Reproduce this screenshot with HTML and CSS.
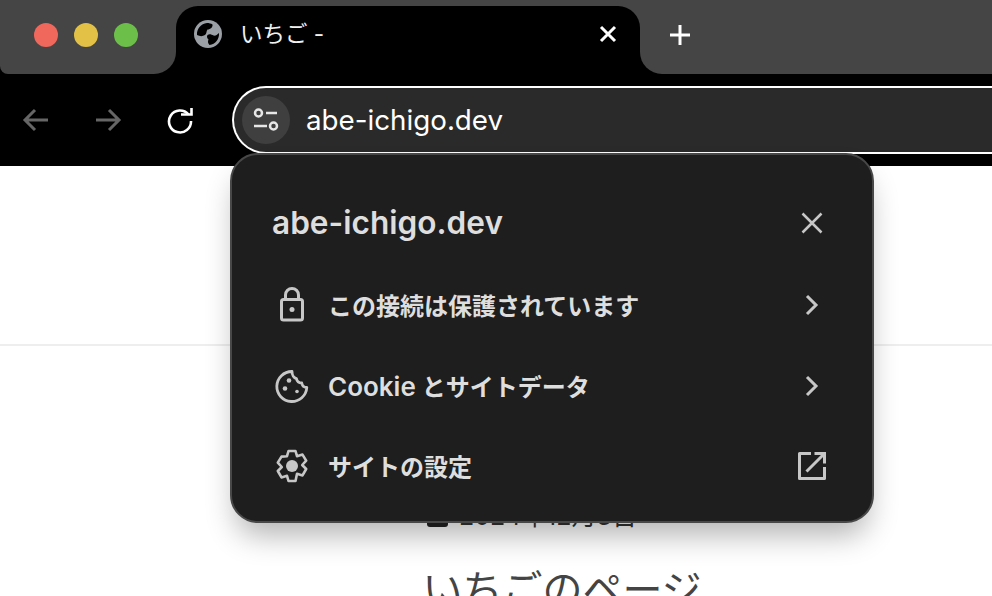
FILE: index.html
```html
<!DOCTYPE html>
<html lang="ja">
<head>
  <meta charset="UTF-8" />
  <meta name="viewport" content="width=device-width, initial-scale=1.0"/>
  <title>いちご -</title>
  <link rel="stylesheet" href="styles.css">
</head>
<body>
  <!-- Tab strip -->
  <div class="tabstrip">
    <div class="strip-left">
      <span class="light light-red"></span>
      <span class="light light-yellow"></span>
      <span class="light light-green"></span>
    </div>
    <div class="tab-slot">
      <div class="tab">
        <svg class="tab-globe" viewBox="0 0 28 28">
          <circle cx="14" cy="14" r="14" fill="#9aa0a6"/>
          <path d="M3 15C2.500 9 7 3.500 13 3c2 0 4 .5 5.500 1.500C19 7 16.500 9.500 13.500 9.500c-1.500 2-.5 4-2.500 5.500-2.500 1.500-5 1.500-8 0z" fill="#000"/>
          <path d="M25 13c.5 6-3.500 11.500-9.500 12-1.500-1.500-2-3.500-1-5.500-1.500-1.500-2-3-1-4.500 2-1.500 4-.5 6 .5 2 .5 3.500-.5 5.500-2.500z" fill="#000"/>
        </svg>
        <span class="tab-title">いちご -</span>
        <svg class="tab-close" viewBox="0 0 18 18"><path d="M2 2l14 14M16 2L2 16" stroke="#fff" stroke-width="3"/></svg>
      </div>
    </div>
    <div class="strip-right">
      <svg class="new-tab" viewBox="0 0 22 22"><path d="M11 1v20M1 11h20" stroke="#fff" stroke-width="3"/></svg>
    </div>
  </div>

  <!-- Toolbar -->
  <div class="toolbar">
    <div class="nav-buttons">
      <svg class="nav-icon" viewBox="0 0 28 28"><path d="M26 14H4M13 4L3 14l10 10" fill="none" stroke="#666" stroke-width="3"/></svg>
      <svg class="nav-icon" viewBox="0 0 28 28"><path d="M2 14h22M15 4l10 10-10 10" fill="none" stroke="#666" stroke-width="3"/></svg>
      <svg class="nav-icon" viewBox="0 0 28 28"><path d="M22.500 8.500A11 11 0 1 0 25 15" fill="none" stroke="#fff" stroke-width="2.600"/><path d="M15 8.500h10.500V2" fill="none" stroke="#fff" stroke-width="2.600"/></svg>
    </div>
    <div class="omnibox">
      <span class="site-button">
        <svg viewBox="0 0 28 28" width="28" height="28">
          <circle cx="6.500" cy="7" r="3.500" fill="none" stroke="#e6e6e6" stroke-width="2.500"/>
          <path d="M14 7h11M2 20h13" stroke="#e6e6e6" stroke-width="2.500"/>
          <circle cx="21.500" cy="20" r="3.500" fill="none" stroke="#e6e6e6" stroke-width="2.500"/>
        </svg>
      </span>
      <span class="url">abe-ichigo.dev</span>
    </div>
  </div>

  <!-- Page behind the popup -->
  <div class="page">
    <div class="page-header"></div>
    <div class="page-body">
      <p class="post-date"><span class="calendar"></span>2024年12月3日</p>
      <h1 class="post-title">いちごのページ</h1>
    </div>
  </div>

  <!-- Site info popup -->
  <div class="popup">
    <div class="popup-row popup-head">
      <span class="popup-title">abe-ichigo.dev</span>
      <svg class="row-icon" viewBox="0 0 40 40"><path d="M10.500 10.500l19 19M29.500 10.500l-19 19" stroke="#c7c7c7" stroke-width="2.500"/></svg>
    </div>
    <div class="popup-row">
      <svg class="row-icon" viewBox="0 0 40 40">
        <rect x="9.500" y="14.500" width="21" height="20.500" rx="2" fill="none" stroke="#c7c7c7" stroke-width="3"/>
        <path d="M13.500 14.500V10a6.500 6.500 0 0 1 13 0v4.500" fill="none" stroke="#c7c7c7" stroke-width="3"/>
        <circle cx="20" cy="24.500" r="2.500" fill="#c7c7c7"/>
      </svg>
      <span class="row-label">この接続は保護されています</span>
      <svg class="row-icon" viewBox="0 0 40 40"><path d="M15 11l9 9-9 9" fill="none" stroke="#c7c7c7" stroke-width="3"/></svg>
    </div>
    <div class="popup-row">
      <svg class="row-icon" viewBox="0 0 40 40">
        <path d="M20 5.500A15 15 0 1 0 34.800 21.500c-2.800-.2-4.800-1.800-5-4.500-2.800 0-4.800-1.500-5.300-4.300C22 12 20 9 20 5.500z" fill="none" stroke="#c7c7c7" stroke-width="2.800" stroke-linejoin="round"/>
        <circle cx="17" cy="14.500" r="2.300" fill="#c7c7c7"/>
        <circle cx="13" cy="22.500" r="2.300" fill="#c7c7c7"/>
        <circle cx="25" cy="25.500" r="1.800" fill="#c7c7c7"/>
      </svg>
      <span class="row-label"><span class="latin">Cookie</span> とサイトデータ</span>
      <svg class="row-icon" viewBox="0 0 40 40"><path d="M15 11l9 9-9 9" fill="none" stroke="#c7c7c7" stroke-width="3"/></svg>
    </div>
    <div class="popup-row popup-row-last">
      <svg class="row-icon" viewBox="0 0 40 40">
        <path d="M16.500 5h7l1.500 5.200 5.500-1.600 3.700 6-4 4.400 4 4-3.700 6.400-5.500-1.600L23.500 35h-7L15 29.800l-5.500 1.600-3.700-6.400 4-4-4-4.400 3.700-6L15 10.200z" fill="none" stroke="#c7c7c7" stroke-width="2.600" stroke-linejoin="round"/>
        <circle cx="20" cy="20" r="6" fill="#c7c7c7"/>
      </svg>
      <span class="row-label">サイトの設定</span>
      <svg class="row-icon" viewBox="0 0 40 40">
        <path d="M19 7.500H7.500v25h25V21" fill="none" stroke="#c7c7c7" stroke-width="3" stroke-linejoin="round"/>
        <path d="M14.500 25.500L32 8M22.500 7.500h10v10" fill="none" stroke="#c7c7c7" stroke-width="3"/>
      </svg>
    </div>
  </div>
</body>
</html>
```

FILE: styles.css
```css
body {
  margin: 0;
  width: 992px;
  height: 596px;
  overflow: hidden;
  position: relative;
  background: #fff;
  font-family: Inter, "Noto Sans CJK JP", sans-serif;
}

/* tab strip */
.tabstrip {
  display: flex;
  height: 74px;
  background: #000;
}
.strip-left {
  width: 176px;
  display: flex;
  align-items: center;
  gap: 16px;
  padding: 0 0 4px 34px;
  box-sizing: border-box;
  background: #454545;
  border-radius: 0 0 22px 8px;
}
.light {
  width: 24px;
  height: 24px;
  border-radius: 50%;
}
.light-red { background: #f0675c; }
.light-yellow { background: #e2c146; }
.light-green { background: #6cc04a; }
.tab-slot {
  width: 464px;
  padding-top: 6px;
  box-sizing: border-box;
  background: #454545;
}
.tab {
  height: 68px;
  display: flex;
  align-items: center;
  padding: 0 23px 12px 18px;
  box-sizing: border-box;
  background: #000;
  border-radius: 22px 22px 0 0;
}
.tab-globe {
  width: 28px;
  height: 28px;
  margin-right: 20px;
}
.tab-title {
  flex: 1;
  margin-left: -2px;
  color: #f1f1f1;
  font-size: 22.500px;
  line-height: 28px;
}
.tab-close {
  width: 18px;
  height: 18px;
}
.strip-right {
  flex: 1;
  padding: 0 0 4px 29px;
  display: flex;
  align-items: center;
  background: #454545;
  border-radius: 0 0 0 22px;
}
.new-tab {
  width: 22px;
  height: 22px;
}

/* toolbar */
.toolbar {
  display: flex;
  align-items: center;
  height: 92px;
  background: #000;
}
.nav-buttons {
  display: flex;
  gap: 44px;
  width: 232px;
  padding-left: 22px;
  box-sizing: border-box;
}
.nav-icon {
  width: 28px;
  height: 28px;
}
.omnibox {
  flex: 1;
  height: 68px;
  display: flex;
  align-items: center;
  gap: 16px;
  padding-left: 8px;
  box-sizing: border-box;
  background: #2a2a2a;
  border: 2px solid #fff;
  border-right: none;
  border-radius: 34px 0 0 34px;
}
.site-button {
  width: 48px;
  height: 48px;
  display: flex;
  align-items: center;
  justify-content: center;
  border-radius: 50%;
  background: #3f3f3f;
}
.url {
  color: #fff;
  font-size: 27.750px;
}

/* page under the popup */
.page-header {
  height: 178px;
  border-bottom: 2px solid #eee;
}
.page-body {
  display: flex;
  flex-direction: column;
  align-items: center;
  padding: 156px 0 0 132px;
}
.post-date {
  margin: 0 60px 0 0;
  display: flex;
  align-items: center;
  gap: 11px;
  font-size: 25px;
  line-height: 28px;
  color: #333;
}
.calendar {
  width: 21px;
  height: 22px;
  background: #222;
  border-radius: 3px;
}
.post-title {
  margin: 32px 0 0;
  font-size: 40px;
  font-weight: 400;
  line-height: 56px;
  white-space: nowrap;
  color: #444;
}

/* site info popup */
.popup {
  position: absolute;
  left: 230px;
  top: 153px;
  width: 644px;
  height: 370px;
  padding: 27px 40px 0;
  box-sizing: border-box;
  background: #1e1e1e;
  border: 2px solid #484848;
  border-radius: 28px;
  box-shadow: 0 18px 30px -6px rgba(0, 0, 0, .3);
}
.popup-row {
  display: flex;
  align-items: center;
  gap: 16px;
  height: 81px;
}
.popup-head {
  justify-content: space-between;
  margin-bottom: 1px;
}
.popup-row-last {
  margin-top: -1px;
}
.popup-title {
  color: #dedede;
  font-size: 31.600px;
  font-weight: 600;
}
.row-icon {
  width: 40px;
  height: 40px;
  flex-shrink: 0;
}
.row-label {
  flex: 1;
  color: #dedede;
  font-size: 24px;
  font-weight: 600;
}
.latin {
  font-size: 26px;
}
```
